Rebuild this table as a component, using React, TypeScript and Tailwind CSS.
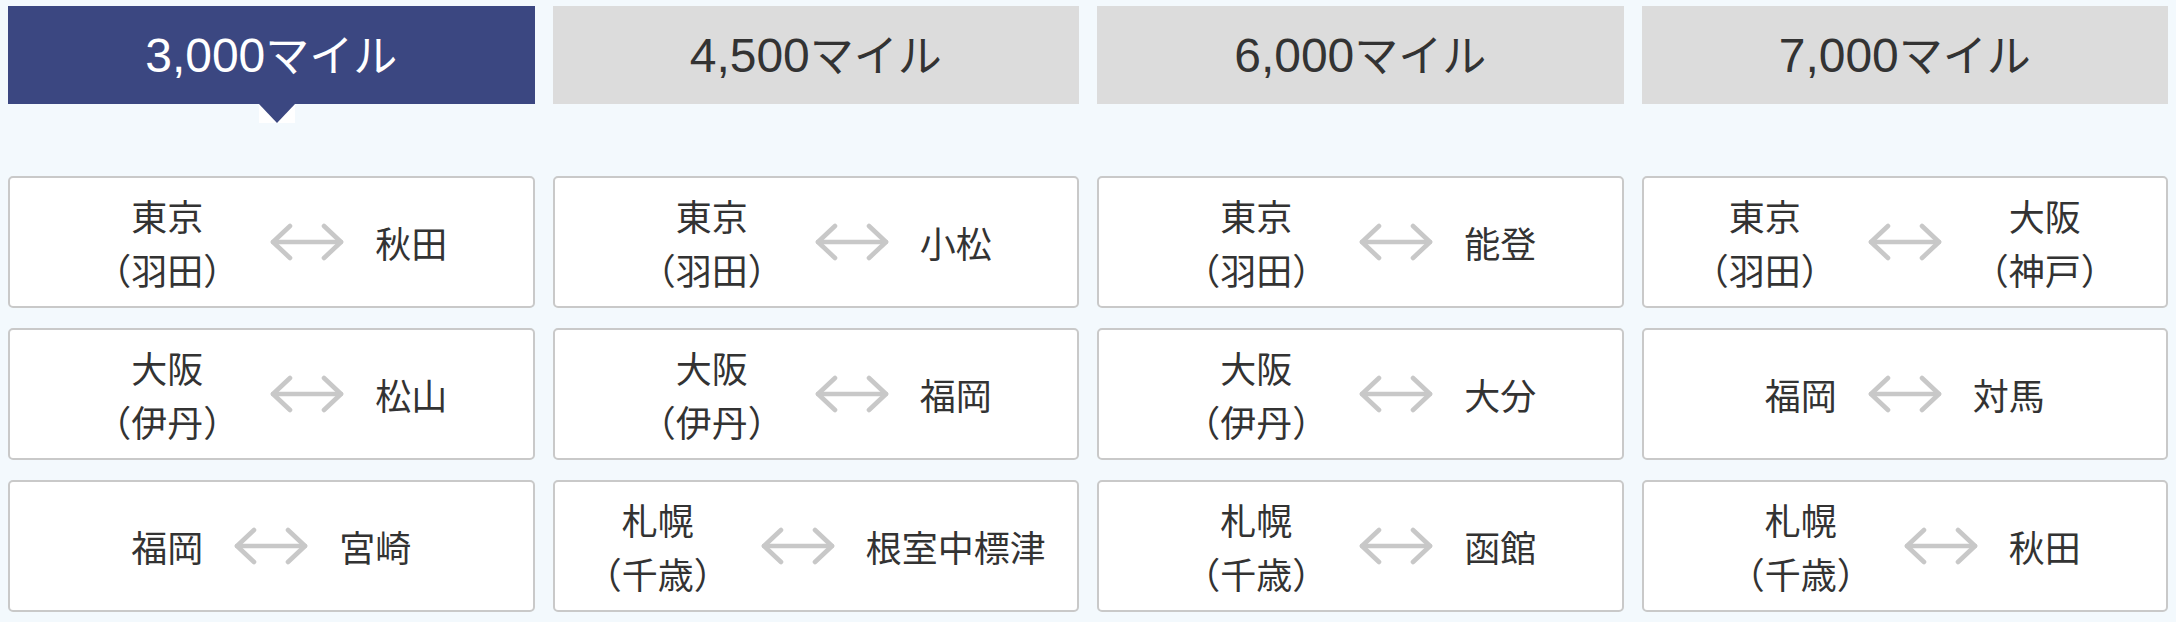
import React from "react";

type Place = string[];
type Route = { from: Place; to: Place };

const tabs = [
  { num: "3,000", active: true },
  { num: "4,500", active: false },
  { num: "6,000", active: false },
  { num: "7,000", active: false },
];

const T: Place = ["東京", "（羽田）"];
const O: Place = ["大阪", "（伊丹）"];
const S: Place = ["札幌", "（千歳）"];

const columns: Route[][] = [
  [
    { from: T, to: ["秋田"] },
    { from: O, to: ["松山"] },
    { from: ["福岡"], to: ["宮崎"] },
  ],
  [
    { from: T, to: ["小松"] },
    { from: O, to: ["福岡"] },
    { from: S, to: ["根室中標津"] },
  ],
  [
    { from: T, to: ["能登"] },
    { from: O, to: ["大分"] },
    { from: S, to: ["函館"] },
  ],
  [
    { from: T, to: ["大阪", "（神戸）"] },
    { from: ["福岡"], to: ["対馬"] },
    { from: S, to: ["秋田"] },
  ],
];

function Arrow() {
  return (
    <svg width="76" height="38" viewBox="0 0 76 38" className="shrink-0" fill="none">
      <g stroke="#c8c8c8" strokeWidth="4.6" strokeLinecap="round" strokeLinejoin="round">
        <line x1="4" y1="19" x2="72" y2="19" />
        <polyline points="21,3 4,19 21,35" />
        <polyline points="55,3 72,19 55,35" />
      </g>
    </svg>
  );
}

function PlaceText({ lines }: { lines: Place }) {
  return (
    <div className="text-center leading-[54px] text-[36px] text-[#333333]">
      {lines.map((l, i) => (
        <div key={i} className="whitespace-nowrap">
          {l}
        </div>
      ))}
    </div>
  );
}

export default function App() {
  const rows = [0, 1, 2];
  return (
    <div className="w-[2176px] h-[622px] bg-[#f3f9fd] pt-[6px] px-[8px] font-['Noto_Sans_CJK_JP',sans-serif] overflow-hidden">
      <div className="grid grid-cols-4 gap-x-[18px]">
        {tabs.map((t) => (
          <div
            key={t.num}
            className={
              t.active
                ? "relative h-[98px] bg-[#3b4781] text-white flex items-center justify-center"
                : "relative h-[98px] bg-[#dcdcdc] text-[#333333] flex items-center justify-center"
            }
          >
            <span className="whitespace-nowrap leading-none">
              <span className="font-['Liberation_Sans',sans-serif] text-[48px]">{t.num}</span>
              <span className="text-[44px]">マイル</span>
            </span>
            {t.active && (
              <div className="absolute left-[251px] top-full w-[36px] h-[19px] bg-white">
                <svg width="36" height="19" viewBox="0 0 36 19" className="block">
                  <polygon points="0,0 36,0 18,19" fill="#3b4781" />
                </svg>
              </div>
            )}
          </div>
        ))}
      </div>
      <div className="mt-[72px] grid grid-cols-4 gap-x-[18px] gap-y-[20px]">
        {rows.map((r) =>
          columns.map((col, ci) => {
            const route = col[r];
            return (
              <div
                key={`${r}-${ci}`}
                className="h-[132px] bg-white border-2 border-[#c9c9c9] rounded-[5px] flex items-center justify-center gap-[30px]"
              >
                <PlaceText lines={route.from} />
                <Arrow />
                <PlaceText lines={route.to} />
              </div>
            );
          })
        )}
      </div>
    </div>
  );
}
